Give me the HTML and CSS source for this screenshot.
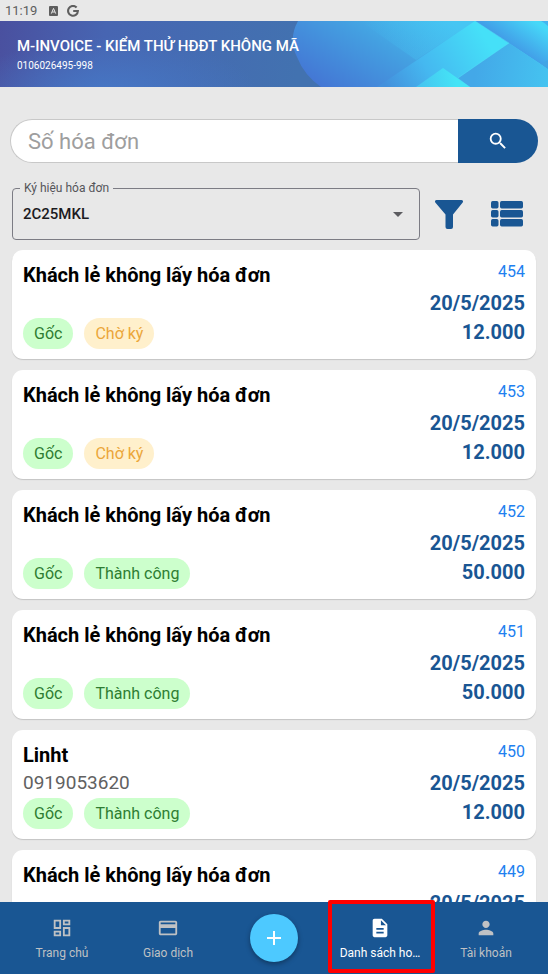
FILE: index.html
```html
<!DOCTYPE html>
<html lang="vi">
<head>
<meta charset="utf-8">
<meta name="viewport" content="width=device-width, initial-scale=1">
<title>Danh sách hóa đơn</title>
<link rel="stylesheet" href="styles.css">
</head>
<body>
<div class="status">
  <span>11:19</span>
  <svg class="status-a" viewBox="0 0 9 10"><rect width="9" height="10" rx="1" fill="#5e5e5e"/><path d="M2.3 7.6 4.5 2.4 6.7 7.6M3.2 6h2.6" fill="none" stroke="#e8e8e8" stroke-width="1"/></svg>
  <svg class="status-g" viewBox="0 0 12 12"><path d="M9.6 2.5A4.9 4.9 0 1 0 10.9 6H6.2" fill="none" stroke="#5e5e5e" stroke-width="2.1"/></svg>
</div>
<header class="hero">
  <svg class="hero-art" viewBox="0 0 548 66" preserveAspectRatio="none" aria-hidden="true">
    <defs>
      <linearGradient id="base" gradientUnits="userSpaceOnUse" x1="0" y1="0" x2="300" y2="40"><stop offset="0" stop-color="#4a509f"/><stop offset=".35" stop-color="#4765b2"/><stop offset="1" stop-color="#4272b0"/></linearGradient>
      <radialGradient id="glow" gradientUnits="userSpaceOnUse" cx="0" cy="0" r="1" gradientTransform="translate(110 76) scale(150 60)"><stop offset="0" stop-color="#4678c6"/><stop offset="1" stop-color="#4678c6" stop-opacity="0"/></radialGradient>
      <linearGradient id="disc" gradientUnits="userSpaceOnUse" x1="320" y1="66" x2="385" y2="-40"><stop offset="0" stop-color="#4476d4"/><stop offset=".55" stop-color="#44a0e1"/><stop offset="1" stop-color="#46c6f2"/></linearGradient>
      <linearGradient id="sheen" gradientUnits="userSpaceOnUse" x1="360" y1="0" x2="470" y2="0"><stop offset="0" stop-color="#46c6f4" stop-opacity="0"/><stop offset="1" stop-color="#46c6f4"/></linearGradient>
      <linearGradient id="band" gradientUnits="userSpaceOnUse" x1="385" y1="64" x2="480" y2="8"><stop offset="0" stop-color="#4390dc"/><stop offset=".4" stop-color="#45b8f0"/><stop offset="1" stop-color="#45e0f8"/></linearGradient>
      <linearGradient id="corner" gradientUnits="userSpaceOnUse" x1="510" y1="22" x2="528" y2="-4"><stop offset="0" stop-color="#429fe8"/><stop offset="1" stop-color="#46d8f8"/></linearGradient>
      <linearGradient id="low" gradientUnits="userSpaceOnUse" x1="475" y1="50" x2="548" y2="58"><stop offset="0" stop-color="#43a8e8"/><stop offset="1" stop-color="#45c3f0"/></linearGradient>
      <linearGradient id="tip" gradientUnits="userSpaceOnUse" x1="420" y1="66" x2="456" y2="58"><stop offset="0" stop-color="#45c5f0"/><stop offset="1" stop-color="#44e4f6"/></linearGradient>
    </defs>
    <rect width="548" height="66" fill="url(#base)"/>
    <rect width="300" height="66" fill="url(#glow)"/>
    <path d="M298 0Q288 18 297 36Q304 54 321 66H548V0Z" fill="url(#disc)"/>
    <path d="M360 0H475L416 39Z" fill="url(#sheen)" opacity=".6"/>
    <path d="M475 0 377 66H548V0Z" fill="url(#band)"/>
    <path d="M475 0H548V48Z" fill="url(#corner)"/>
    <path d="M541 0Q545 2 548 5V0Z" fill="#43b4ef"/>
    <path d="M509 22 548 48V66H470L458 57Z" fill="url(#low)"/>
    <path d="M541 43 548 39V48Z" fill="#43a5e5"/>
    <path d="M443 47 416 66H470Z" fill="url(#tip)"/>
    <path d="M475 0 509 22 458 57" fill="none" stroke="#55e8fa" stroke-width="1" opacity=".4"/>
  </svg>
  <h1>M-INVOICE - KIỂM THỬ HĐĐT KHÔNG MÃ</h1>
  <p>0106026495-998</p>
</header>
<main>
  <form class="search">
    <input type="text" placeholder="Số hóa đơn" aria-label="Số hóa đơn">
    <button type="button" aria-label="Tìm kiếm"><svg viewBox="0 0 24 24" width="22" height="22"><path fill="#fff" d="M15.5 14h-.79l-.28-.27A6.47 6.47 0 0 0 16 9.5 6.5 6.5 0 1 0 9.500 16c1.610 0 3.090-.59 4.230-1.570l.27.28v.79l5 4.990L20.490 19zm-6 0A4.490 4.490 0 0 1 5 9.500 4.490 4.490 0 0 1 9.500 5 4.490 4.490 0 0 1 14 9.500 4.490 4.490 0 0 1 9.500 14"/></svg></button>
  </form>
  <div class="filters">
    <div class="field">
      <label for="serial">Ký hiệu hóa đơn</label>
      <select id="serial"><option>2C25MKL</option></select>
      <svg class="caret" viewBox="0 0 10 5"><path d="M0 0h10L5 5Z" fill="#5c5c60"/></svg>
    </div>
    <div class="actions">
      <button type="button" aria-label="Lọc"><svg viewBox="0 0 28 29" width="28" height="29"><path fill="#195693" d="M1.500 0h25a1.500 1.500 0 0 1 1.200 2.400L18 14.500V27q0 2-2 2h-3.500q-2 0-2-2V14.500L.3 2.400A1.500 1.500 0 0 1 1.500 0Z"/></svg></button>
      <button type="button" aria-label="Danh sách"><svg viewBox="0 0 32 26" width="32" height="26" fill="#195693"><rect width="7.500" height="7.500" rx="1.700"/><rect x="9" width="23" height="7.500" rx="1.700"/><rect y="9" width="7.500" height="7.500" rx="1.700"/><rect x="9" y="9" width="23" height="7.500" rx="1.700"/><rect y="18" width="7.500" height="7.500" rx="1.700"/><rect x="9" y="18" width="23" height="7.500" rx="1.700"/></svg></button>
    </div>
  </div>
  <div class="list">
    <article class="card">
      <div class="info"><h2>Khách lẻ không lấy hóa đơn</h2><p class="phone"></p><div class="chips"><span class="chip">Gốc</span><span class="chip wait">Chờ ký</span></div></div>
      <div class="sum"><span class="no">454</span><strong>20/5/2025</strong><strong>12.000</strong></div>
    </article>
    <article class="card">
      <div class="info"><h2>Khách lẻ không lấy hóa đơn</h2><p class="phone"></p><div class="chips"><span class="chip">Gốc</span><span class="chip wait">Chờ ký</span></div></div>
      <div class="sum"><span class="no">453</span><strong>20/5/2025</strong><strong>12.000</strong></div>
    </article>
    <article class="card">
      <div class="info"><h2>Khách lẻ không lấy hóa đơn</h2><p class="phone"></p><div class="chips"><span class="chip">Gốc</span><span class="chip">Thành công</span></div></div>
      <div class="sum"><span class="no">452</span><strong>20/5/2025</strong><strong>50.000</strong></div>
    </article>
    <article class="card">
      <div class="info"><h2>Khách lẻ không lấy hóa đơn</h2><p class="phone"></p><div class="chips"><span class="chip">Gốc</span><span class="chip">Thành công</span></div></div>
      <div class="sum"><span class="no">451</span><strong>20/5/2025</strong><strong>50.000</strong></div>
    </article>
    <article class="card">
      <div class="info"><h2>Linht</h2><p class="phone">0919053620</p><div class="chips"><span class="chip">Gốc</span><span class="chip">Thành công</span></div></div>
      <div class="sum"><span class="no">450</span><strong>20/5/2025</strong><strong>12.000</strong></div>
    </article>
    <article class="card">
      <div class="info"><h2>Khách lẻ không lấy hóa đơn</h2><p class="phone"></p></div>
      <div class="sum"><span class="no">449</span><strong>20/5/2025</strong></div>
    </article>
  </div>
</main>
<nav class="tabs">
  <a href="#"><svg viewBox="0 0 24 24"><path fill="currentColor" d="M19 5v2h-4V5zM9 5v6H5V5zm10 8v6h-4v-6zM9 17v2H5v-2zM21 3h-8v6h8zM11 3H3v10h8zm10 8h-8v10h8zm-10 4H3v6h8z"/></svg><span>Trang chủ</span></a>
  <a href="#"><svg viewBox="0 0 24 24"><path fill="currentColor" d="M20 4H4c-1.110 0-1.990.89-1.990 2L2 18c0 1.110.89 2 2 2h16c1.110 0 2-.89 2-2V6c0-1.110-.89-2-2-2m0 14H4v-6h16zm0-10H4V6h16z"/></svg><span>Giao dịch</span></a>
  <button type="button" class="fab" aria-label="Thêm"><svg viewBox="0 0 24 24"><path fill="#fff" d="M19 13h-6v6h-2v-6H5v-2h6V5h2v6h6z"/></svg></button>
  <a href="#" class="active"><svg viewBox="0 0 24 24"><path fill="currentColor" d="M14 2H6c-1.100 0-1.990.9-1.990 2L4 20c0 1.100.89 2 1.990 2H18c1.100 0 2-.9 2-2V8zm2 16H8v-2h8zm0-4H8v-2h8zm-3-5V3.500L18.500 9z"/></svg><span>Danh sách ho…</span></a>
  <a href="#"><svg viewBox="0 0 24 24"><path fill="currentColor" d="M12 12c2.210 0 4-1.790 4-4s-1.790-4-4-4-4 1.790-4 4 1.790 4 4 4m0 2c-2.670 0-8 1.340-8 4v2h16v-2c0-2.660-5.330-4-8-4"/></svg><span>Tài khoản</span></a>
</nav>
</body>
</html>
```

FILE: styles.css
```css
* { box-sizing: border-box; }
body {
  margin: 0;
  height: 100vh;
  display: flex;
  flex-direction: column;
  overflow: hidden;
  background: #e8e8e8;
  font-family: Roboto, "Noto Sans", sans-serif;
  color: #000;
}
h1, h2, p { margin: 0; }
button { border: 0; padding: 0; background: none; font: inherit; }
svg { display: block; }

.status {
  display: flex;
  align-items: center;
  height: 21px;
  padding-left: 5px;
  font-size: 13px;
  color: #5e5e5e;
}
.status-a { width: 9px; height: 10px; margin-left: 12px; }
.status-g { width: 12px; height: 12px; margin-left: 9px; }

.hero {
  position: relative;
  flex: none;
  padding: 15px 17px 13px;
  color: #fff;
}
.hero-art { position: absolute; inset: 0; width: 100%; height: 100%; }
.hero h1 { position: relative; font-size: 15px; line-height: 20px; font-weight: 500; }
.hero p { position: relative; padding-top: 2px; font-size: 10px; line-height: 16px; }

main {
  flex: 1;
  min-height: 0;
  overflow: hidden;
  padding: 32px 12px 0;
}
.search {
  display: flex;
  height: 44px;
  margin: 0 -2px;
}
.search input {
  flex: 1;
  min-width: 0;
  border: 1px solid #c8c8c8;
  border-right: 0;
  border-radius: 22px 0 0 22px;
  padding: 0 17px;
  background: #fff;
  font: 22px Roboto, "Noto Sans", sans-serif;
}
.search input::placeholder { color: #9e9e9e; }
.search button {
  display: grid;
  place-items: center;
  width: 80px;
  border-radius: 0 22px 22px 0;
  background: #195693;
}
.filters {
  display: flex;
  align-items: center;
  gap: 15px;
  margin-top: 25px;
  padding-right: 13px;
}
.actions { display: flex; align-items: center; gap: 28px; }
.field { position: relative; flex: 1; }
.field label {
  position: absolute;
  top: -7px;
  left: 8px;
  padding: 0 4px;
  background: #e8e8e8;
  font-size: 12px;
  line-height: 14px;
  color: #55555a;
}
.field select {
  display: block;
  width: 100%;
  height: 52px;
  border: 1px solid #7c7c84;
  border-radius: 4px;
  padding: 0 10px;
  appearance: none;
  background: transparent;
  font: 500 15px Roboto, "Noto Sans", sans-serif;
  color: #1c1b1f;
}
.caret { position: absolute; right: 17px; top: 24px; width: 10px; height: 5px; }

.list { display: grid; gap: 11px; margin-top: 10px; }
.card {
  display: flex;
  justify-content: space-between;
  padding: 10px 11px;
  border-radius: 11px;
  background: #fff;
  box-shadow: 0 1px 1px #c4c4c4;
}
.card h2 { padding-top: 1px; font-size: 20px; line-height: 28px; font-weight: 700; }
.phone { height: 28px; font-size: 19px; line-height: 28px; color: #616161; }
.chips { display: flex; gap: 11px; margin-top: 1px; }
.chip {
  padding: 0 11px;
  border-radius: 16px;
  background: #ccffcc;
  font-size: 16px;
  line-height: 31px;
  color: #2e7d32;
}
.chip.wait { background: #fff0cc; color: #eba63a; }
.sum { display: flex; flex-direction: column; align-items: flex-end; color: #195693; }
.no { margin-bottom: 5px; font-size: 16px; line-height: 24px; color: #2080f0; }
.sum strong { font-size: 20px; line-height: 29px; font-weight: 700; }

.tabs {
  position: relative;
  flex: none;
  display: grid;
  grid-template-columns: repeat(5, minmax(0, 1fr));
  height: 72px;
  padding: 0 9px;
  background: #195693;
}
.tabs a {
  position: relative;
  display: flex;
  flex-direction: column;
  align-items: center;
  gap: 5px;
  padding: 15px 4px 0;
  font-size: 12px;
  line-height: 18px;
  color: #bfc1c4;
  text-decoration: none;
  white-space: nowrap;
}
.tabs a svg { width: 22px; height: 22px; }
.tabs .active { color: #fff; }
.active::after {
  content: "";
  position: absolute;
  inset: -2px -2px 1px 1px;
  border: 4px solid #f00;
  border-radius: 2px;
}
.fab {
  display: grid;
  place-items: center;
  place-self: center;
  width: 48px;
  height: 48px;
  border-radius: 50%;
  background: #4dc9ff;
  box-shadow: 0 2px 5px rgba(0, 0, 0, .35);
}
.fab svg { width: 24px; height: 24px; }
```
